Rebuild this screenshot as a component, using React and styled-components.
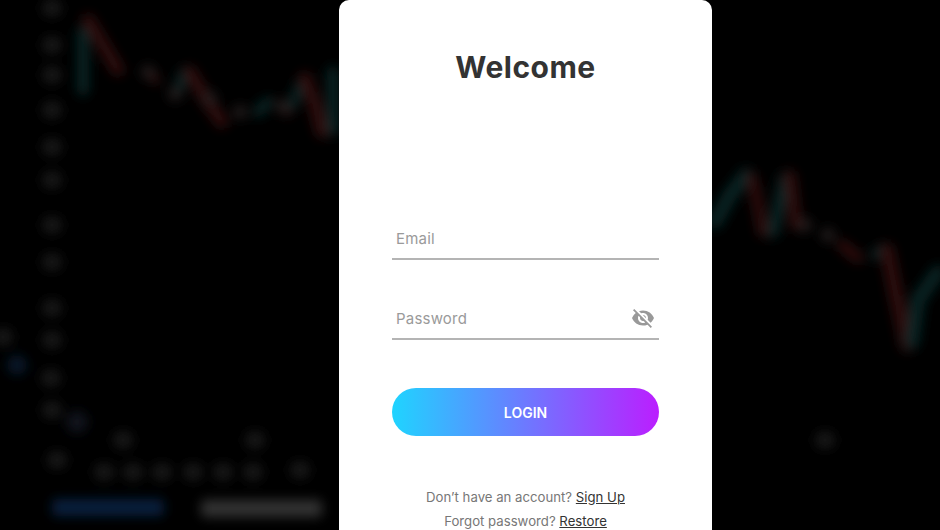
import React from "react";
import styled, { createGlobalStyle } from "styled-components";
import { MdVisibilityOff } from "react-icons/md";

const Global = createGlobalStyle`
  html, body { margin: 0; padding: 0; height: 100%; background: #000; }
  body { font-family: Inter, "Noto Sans", "Liberation Sans", sans-serif; overflow: hidden; }
  #root { height: 100%; }
`;

const Page = styled.main`
  position: relative;
  height: 530px;
  overflow: hidden;
  background: #000;
  display: flex;
  padding-left: 339px;
`;

const Backdrop = styled.svg`
  position: absolute;
  inset: 0;
  width: 940px;
  height: 530px;
  opacity: 0.6;
`;

const Card = styled.section`
  position: relative;
  box-sizing: border-box;
  flex: none;
  width: 373px;
  height: 560px;
  padding: 46px 53px 0;
  background: #fff;
  border-radius: 10px 10px 0 0;
  display: flex;
  flex-direction: column;
`;

const Title = styled.h1`
  margin: 0 0 130px;
  font-size: 30px;
  line-height: 42px;
  font-weight: 700;
  letter-spacing: 0.5px;
  color: #333;
  text-align: center;
`;

const Field = styled.label`
  box-sizing: border-box;
  height: 42px;
  margin-bottom: ${(p) => p.$gap}px;
  padding: 0 4px 0 4px;
  display: flex;
  align-items: center;
  border-bottom: 2px solid #b4b4b4;
`;

const Input = styled.input`
  flex: 1;
  min-width: 0;
  border: 0;
  outline: 0;
  padding: 0;
  background: transparent;
  font: 400 15px Inter, "Noto Sans", sans-serif;
  letter-spacing: 0.2px;
  color: #333;
  &::placeholder { color: #9a9a9a; opacity: 1; }
`;

const Eye = styled(MdVisibilityOff)`
  width: 24px;
  height: 24px;
  color: #999;
  flex: none;
`;

const LoginButton = styled.button`
  height: 48px;
  border: 0;
  border-radius: 24px;
  background: linear-gradient(90deg, #1fd4ff 0%, #bb1eff 100%);
  color: #fff;
  font: 600 14px Inter, "Noto Sans", sans-serif;
  margin-bottom: 52px;
`;

const Note = styled.p`
  margin: 0 0 5px;
  font-size: 13.2px;
  line-height: 19px;
  color: #777;
  text-align: center;
`;

const NoteLink = styled.a`
  color: #333;
  text-decoration: underline;
`;

const red = "#501818";
const teal = "#0e3c3c";
const lines = [
  [teal, 12, "83,32 83,90"],
  [red, 13, "88,20 105,48 118,70"],
  [red, 9, "148,72 156,80"],
  [teal, 11, "185,72 176,95"],
  [red, 13, "190,72 205,98 222,122"],
  [teal, 11, "258,112 268,102"],
  [red, 9, "280,104 288,112"],
  [teal, 10, "292,105 302,82"],
  [red, 13, "305,78 315,105 322,132"],
  [teal, 12, "333,72 333,130"],
  [teal, 14, "715,222 730,195 746,175"],
  [red, 11, "752,178 758,205 763,232"],
  [teal, 12, "773,232 785,178"],
  [red, 12, "790,176 796,225"],
  [red, 11, "842,245 858,258"],
  [teal, 10, "875,255 884,248"],
  [red, 14, "887,250 896,295 907,345"],
  [teal, 14, "912,342 918,300 938,272"],
];
const dots = [
  [52, 8], [52, 45], [52, 75], [52, 110], [52, 147], [52, 180], [52, 225], [52, 262],
  [52, 308], [52, 340], [51, 378], [52, 410], [57, 460], [3, 337], [123, 440], [255, 440],
  [104, 472], [133, 472], [162, 472], [193, 472], [223, 472], [253, 472], [300, 470], [825, 440],
];
const warm = [[148, 72], [210, 98], [240, 112], [283, 107], [805, 225], [828, 235], [175, 94]];

const Chart = () => (
  <Backdrop viewBox="0 0 940 530" aria-hidden="true">
    <defs>
      <filter id="blur" x="-10%" y="-10%" width="120%" height="120%">
        <feGaussianBlur stdDeviation="6" />
      </filter>
    </defs>
    <g filter="url(#blur)">
      {lines.map(([color, width, points]) => (
        <polyline key={points} points={points} fill="none" stroke={color} strokeWidth={width} strokeLinecap="round" />
      ))}
      {dots.map(([x, y]) => <ellipse key={`${x}-${y}`} cx={x} cy={y} rx="10" ry="9" fill="#2a2a2a" />)}
      {warm.map(([x, y]) => <circle key={`${x}-${y}`} cx={x} cy={y} r="7" fill="#3c3230" />)}
      <circle cx="17" cy="365" r="10" fill="#0a2a4a" />
      <circle cx="77" cy="422" r="11" fill="#1a2230" />
      <rect x="52" y="499" width="112" height="17" rx="4" fill="#073468" />
      <rect x="201" y="500" width="121" height="17" rx="4" fill="#565656" />
    </g>
  </Backdrop>
);

export default function App() {
  return (
    <>
      <Global />
      <Page>
        <Chart />
        <Card>
          <Title>Welcome</Title>
          <Field $gap={38}>
            <Input placeholder="Email" />
          </Field>
          <Field $gap={48}>
            <Input placeholder="Password" type="password" />
            <Eye />
          </Field>
          <LoginButton>LOGIN</LoginButton>
          <Note>Don’t have an account? <NoteLink>Sign Up</NoteLink></Note>
          <Note>Forgot password? <NoteLink>Restore</NoteLink></Note>
        </Card>
      </Page>
    </>
  );
}
